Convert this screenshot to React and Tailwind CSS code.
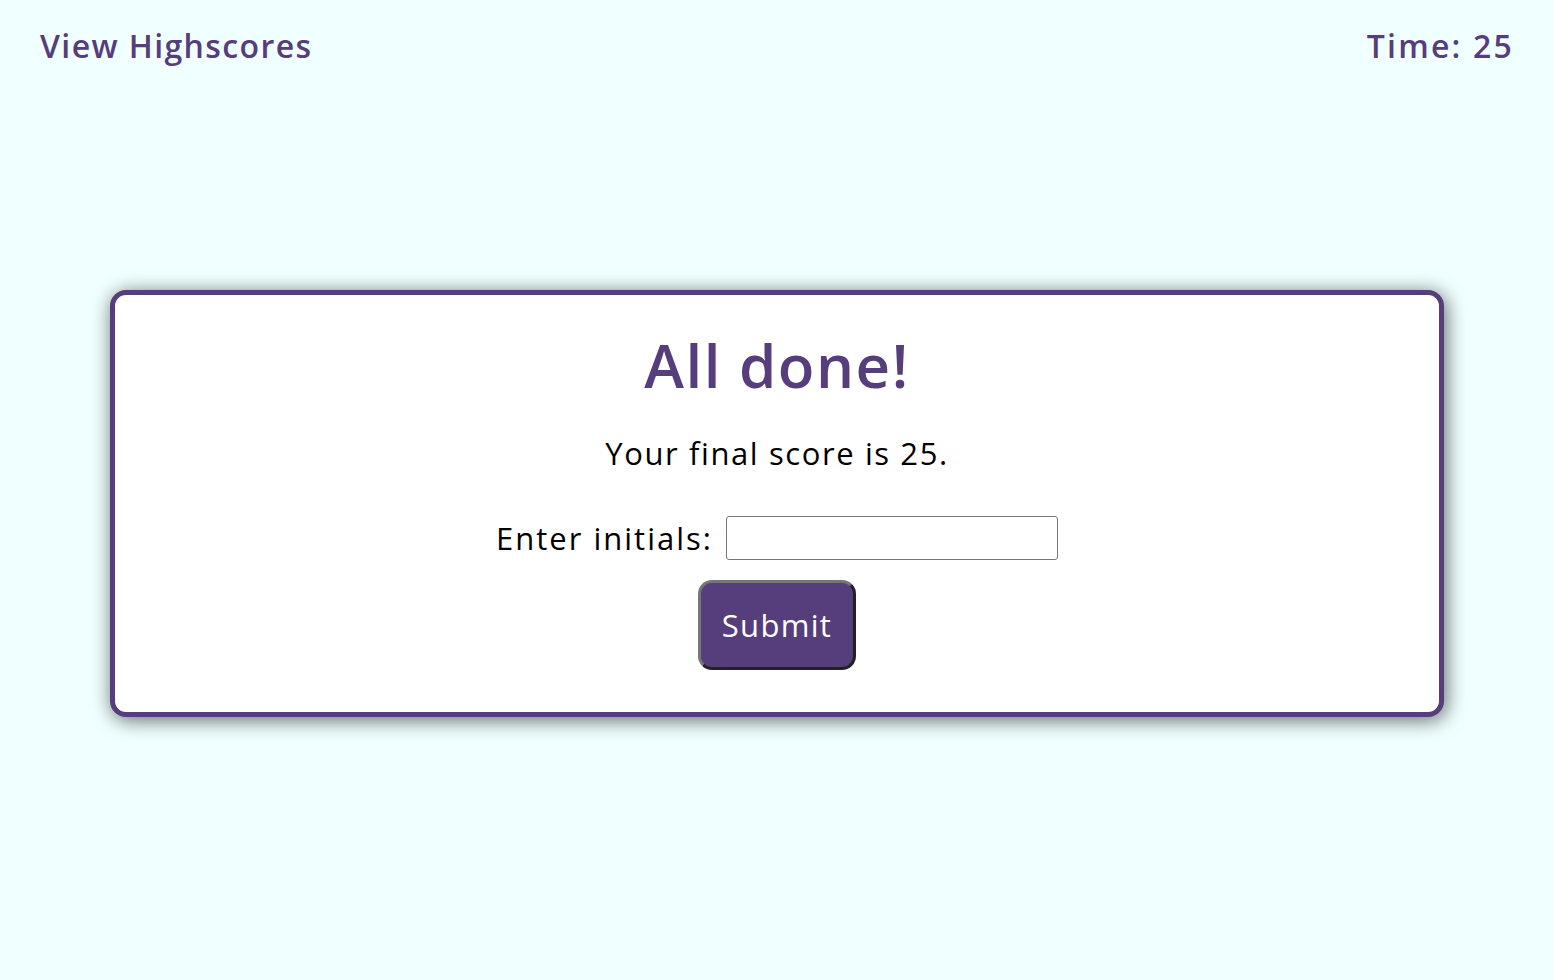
import React, { useState } from "react";

const App = () => {
    const [initials, setInitials] = useState("");

    return (
        <div className="min-h-screen w-full bg-[#f0ffff] font-['Trebuchet_MS','Open_Sans',sans-serif]">
            {/* Top bar */}
            <header className="flex justify-between items-center px-10 pt-[22px] text-[32px] leading-[48px] font-semibold tracking-[1.4px] text-[#563d7c]">
                <a href="#" className="cursor-pointer">View Highscores</a>
                <span className="tracking-[2.2px]">Time: 25</span>
            </header>

            {/* Result card */}
            <main className="mx-[110px] mt-[220px] rounded-[16px] border-[5px] border-[#563d7c] bg-white shadow-[2px_3px_20px_rgba(0,0,0,0.6)] flex flex-col items-center pt-[30px] pb-[42px]">
                <h1 className="text-[60px] leading-[80px] font-semibold tracking-[1.5px] text-[#563d7c]">All done!</h1>
                <p className="mt-[28px] text-[31px] leading-[40px] tracking-[1.6px] text-black">Your final score is 25.</p>
                <form
                    className="flex flex-col items-center"
                    onSubmit={(e) => e.preventDefault()}
                >
                    <div className="mt-[43px] flex items-center gap-[13px]">
                        <label htmlFor="initials" className="text-[31px] leading-[40px] tracking-[2px] text-black">Enter initials:</label>
                        <input
                            id="initials"
                            type="text"
                            value={initials}
                            onChange={(e) => setInitials(e.target.value)}
                            className="w-[332px] h-[44px] rounded-[3px] border border-[#767676] bg-white px-2 text-[24px] outline-none"
                        />
                    </div>
                    <button
                        type="submit"
                        className="mt-[20px] w-[158px] h-[90px] rounded-[14px] border-[3px] border-t-[#767676] border-l-[#767676] border-r-[#222] border-b-[#222] bg-[#563d7c] text-[31px] tracking-[1.3px] text-white cursor-pointer"
                    >
                        Submit
                    </button>
                </form>
            </main>
        </div>
    );
};

export default App;
